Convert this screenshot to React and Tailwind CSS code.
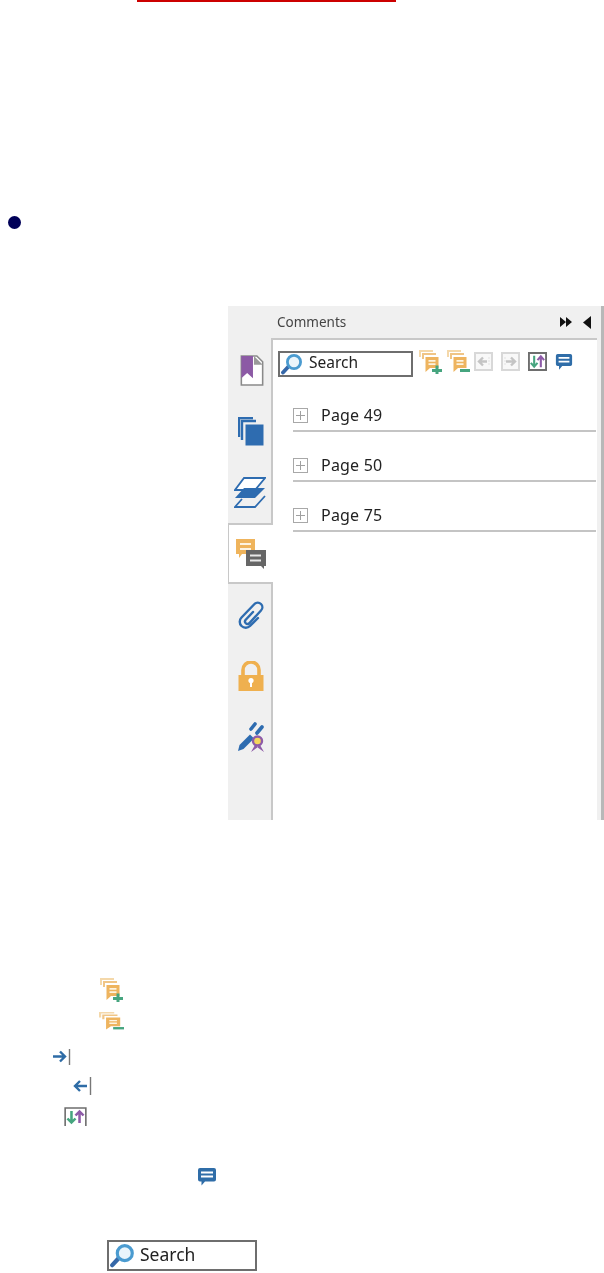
const Stack = ({ sign, className }) => (
  <svg viewBox="0 0 23 24" preserveAspectRatio="none" className={className}>
    <path d="M1 7V1h13" fill="none" stroke="#f4d8aa" strokeWidth="2" />
    <path d="M4 9V4h13" fill="none" stroke="#f0c586" strokeWidth="2" />
    <path d="M6.500 7h13v11H11l-4.500 4z" fill="#eeb45f" />
    <path d="M9.500 10.800h7M9.500 14.200h7" stroke="#fdf3e0" strokeWidth="1.700" />
    <path d="M13 20.500h10" stroke="#46a57f" strokeWidth="3" />
    {sign === "plus" && <path d="M18 15.500v8.500" stroke="#46a57f" strokeWidth="3" />}
  </svg>
);
const BoxArrow = ({ dir }) => (
  <svg viewBox="0 0 19 19" className="w-[19px] h-[19px]">
    <rect x="1" y="1" width="17" height="17" fill="#f8f8f8" stroke="#d8d8d8" strokeWidth="2" />
    {dir === "left" ? (
      <>
        <path d="M13 9.500H5M9 5.500l-4 4 4 4" fill="none" stroke="#c4c4c4" strokeWidth="2.400" />
        <path d="M15 5v9" stroke="#e2e2e2" strokeWidth="1" strokeDasharray="2 1" />
      </>
    ) : (
      <>
        <path d="M5 9.500h8M10 5.500l4 4-4 4" fill="none" stroke="#c4c4c4" strokeWidth="2.400" />
        <path d="M4 5v9" stroke="#e2e2e2" strokeWidth="1" strokeDasharray="2 1" />
      </>
    )}
  </svg>
);
const SortArrows = ({ className, boxed }) => (
  <svg viewBox="0 0 20 20" preserveAspectRatio="none" className={className}>
    <path d={boxed ? "M1 1h18v18H1z" : "M1 19V1h18v18"} fill="#fff" stroke="#6e6e6e" strokeWidth={boxed ? 2 : 1.400} />
    <path d="M6.500 4v11M3 11.500l3.500 4 3.500-4" fill="none" stroke="#46a57f" strokeWidth="2.200" />
    <path d="M13.500 16V5M10 8.500l3.500-4 3.500 4" fill="none" stroke="#8e5ba8" strokeWidth="2.200" />
  </svg>
);
const Chat = ({ className }) => (
  <svg viewBox="0 0 20 20" className={className}>
    <path d="M3 1h14a2 2 0 0 1 2 2v9.500a2 2 0 0 1-2 2H8l-3.500 4v-4H3a2 2 0 0 1-2-2V3a2 2 0 0 1 2-2z" fill="#2f6da8" />
    <path d="M4 5.500h12M4 9.500h12" stroke="#fff" strokeWidth="1.900" />
  </svg>
);
const Magnifier = ({ className }) => (
  <svg viewBox="0 0 22 21" className={className}>
    <path d="M8 12L2 18.500" stroke="#3567a8" strokeWidth="3.800" strokeLinecap="round" />
    <circle cx="13" cy="8" r="6.600" fill="#eaf5fb" stroke="#4a9bd0" strokeWidth="2.800" />
  </svg>
);
const SearchBox = ({ className, textClass, iconClass }) => (
  <div className={`flex items-center border-2 border-[#6e6e6e] bg-white ${className}`}>
    <Magnifier className={iconClass} />
    <span className={`font-['Noto_Sans',sans-serif] text-[#222] ${textClass}`}>Search</span>
  </div>
);
const Tab = ({ active, children }) => (
  <div
    className={
      active
        ? "h-[61px] w-[45px] relative z-10 flex items-center justify-center bg-white border-y-2 border-l border-[#c8c8c8]"
        : "h-[61px] flex items-center justify-center"
    }
  >
    {children}
  </div>
);
const PageRow = ({ n }) => (
  <div className="h-[50px] flex items-center border-b-2 border-[#c4c4c4] ml-[20px] mr-[1px] pt-[18px]">
    <svg viewBox="0 0 15 15" className="w-[15px] h-[15px]">
      <rect x="0.500" y="0.500" width="14" height="14" fill="#fff" stroke="#a8a8a8" />
      <path d="M3 7.500h9M7.500 3v9" stroke="#a0a0a0" />
    </svg>
    <span className="ml-[13px] font-['Noto_Sans',sans-serif] text-[16px] tracking-[0.2px] text-[#222]">Page {n}</span>
  </div>
);

export default function App() {
  return (
    <div className="w-[604px] h-[1273px] bg-white overflow-hidden">
      <div className="ml-[137px] w-[259px] h-[2px] bg-[#cc0000]" />
      <div className="ml-[8px] mt-[214px] w-[13px] h-[13px] rounded-full bg-[#000058]" />
      <div className="ml-[228px] mt-[77px] w-[376px] h-[514px] bg-[#f0f0f0] border-r-[3px] border-[#b8b8b8] flex blur-[0.3px]">
        <div className="w-[43px] pt-[34px] shrink-0 flex flex-col">
          <Tab>
            <svg viewBox="0 0 24 32" className="w-[24px] h-[31px] ml-[5px]">
              <path d="M1 1h16l6 6v24H1z" fill="#fff" stroke="#8a8a8a" strokeWidth="1.600" />
              <path d="M14 1l9 9h-9z" fill="#9a9a9a" />
              <path d="M1 1h12v23l-6-5.500L1 24z" fill="#8c5aa5" />
            </svg>
          </Tab>
          <Tab>
            <svg viewBox="0 0 26 29" className="w-[26px] h-[29px] ml-[3px]">
              <path d="M1 20V1h14M4 23V4h14" fill="none" stroke="#2e6cb0" strokeWidth="2.400" />
              <rect x="7.500" y="7.500" width="18" height="21" fill="#2e6cb0" />
            </svg>
          </Tab>
          <Tab>
            <svg viewBox="0 0 32 31" className="w-[32px] h-[31px] ml-[1px]">
              <path d="M10 1h21L21 13H1z" fill="#fff" stroke="#2e6cb0" strokeWidth="1.800" />
              <path d="M10 11h21L21 21H1z" fill="#2e6cb0" />
              <path d="M8 22l-7 8h20l10-11" fill="none" stroke="#2e6cb0" strokeWidth="1.800" />
            </svg>
          </Tab>
          <Tab active>
            <svg viewBox="0 0 30 30" className="w-[30px] h-[30px]">
              <path d="M0 0h19v15H6l-3 4v-4H0z" fill="#efb45c" />
              <path d="M4 5h11M4 10h11" stroke="#fdf3e0" strokeWidth="1.800" />
              <path d="M10 11h20v16h-2v3l-3-3H10z" fill="#666" />
              <path d="M14 16.500h11M14 21.500h11" stroke="#e8e8e8" strokeWidth="1.800" />
            </svg>
          </Tab>
          <Tab>
            <svg viewBox="0 0 27 30" className="w-[27px] h-[30px] ml-[3px]">
              <path d="M15 12L7.500 20a2.500 2.500 0 0 0 3.500 3.500L23 10.500a4.500 4.500 0 0 0-6.500-6.500L3.500 17.500a6 6 0 0 0 8.500 8.500L20 18" fill="none" stroke="#2e6cb0" strokeWidth="2.400" strokeLinecap="round" />
            </svg>
          </Tab>
          <Tab>
            <svg viewBox="0 0 26 30" className="w-[26px] h-[30px] ml-[3px]">
              <path d="M5 16V9a8 8 0 0 1 16 0v7" fill="none" stroke="#efb04f" strokeWidth="3.600" />
              <path d="M0.500 14h25v16H0.500z" fill="#efb04f" />
              <circle cx="13" cy="19.500" r="2.600" fill="#fff" />
              <path d="M12 20h2v6h-2z" fill="#fff" />
            </svg>
          </Tab>
          <Tab>
            <svg viewBox="0 0 28 32" className="w-[28px] h-[32px] ml-[3px]">
              <path d="M1 30l1.500-6L13 13.500l4 4L6.500 28z" fill="#2e6cb0" />
              <path d="M14 8l4-5M20 12l5-6" stroke="#2e6cb0" strokeWidth="3.600" strokeLinecap="round" />
              <path d="M14 31l4-7 3 2zM27 31l-4-7-3 2z" fill="#8e5ba8" />
              <circle cx="20.500" cy="20" r="4.500" fill="#f4d65c" stroke="#8e5ba8" strokeWidth="2.400" />
            </svg>
          </Tab>
        </div>
        <div className="flex-1 flex flex-col min-w-0">
          <div className="h-[32px] shrink-0 flex items-center pl-[6px] pr-[10px]">
            <span className="font-['Noto_Sans',sans-serif] text-[13.500px] text-[#444] flex-1">Comments</span>
            <svg viewBox="0 0 12 10" className="w-[12px] h-[10px]">
              <path d="M0 0l6 5L0 10zM6 0l6 5L6 10z" fill="#111" />
            </svg>
            <svg viewBox="0 0 8 13" className="w-[8px] h-[13px] ml-[11px]">
              <path d="M8 0v13L0 6.500z" fill="#111" />
            </svg>
          </div>
          <div className="flex-1 bg-white border-t-2 border-l-2 border-[#c8c8c8] mr-[4px] flex flex-col">
            <div className="flex items-start pl-[5px] pt-[11px] h-[42px] shrink-0">
              <SearchBox className="w-[135px] h-[26px] pl-[1px]" iconClass="w-[22px] h-[21px]" textClass="ml-[6px] text-[15.500px] pb-[2px]" />
              <div className="flex items-start ml-[6px] -mt-[1px]">
                <Stack sign="plus" className="w-[23px] h-[24px]" />
                <Stack sign="minus" className="w-[23px] h-[24px] ml-[5px]" />
                <div className="ml-[4px] mt-[2px]"><BoxArrow dir="left" /></div>
                <div className="ml-[8px] mt-[2px]"><BoxArrow dir="right" /></div>
                <SortArrows boxed className="w-[19px] h-[19px] ml-[8px] mt-[2px]" />
                <Chat className="w-[18px] h-[18px] ml-[8px] mt-[3px]" />
              </div>
            </div>
            <PageRow n={49} />
            <PageRow n={50} />
            <PageRow n={75} />
          </div>
        </div>
      </div>
      <div className="blur-[0.3px]">
        <Stack sign="plus" className="ml-[100px] mt-[158px] w-[23px] h-[24px]" />
        <Stack sign="minus" className="ml-[99px] mt-[10px] w-[25px] h-[19px]" />
        <svg viewBox="0 0 19 17" className="ml-[52px] mt-[17px] w-[19px] h-[17px]">
          <path d="M1 8.500h11M8 3.500l5 5-5 5" fill="none" stroke="#2e6ca6" strokeWidth="2.400" />
          <path d="M17.500 1v16" stroke="#777" strokeWidth="1.400" />
        </svg>
        <svg viewBox="0 0 19 18" className="ml-[73px] mt-[12px] w-[19px] h-[18px]">
          <path d="M14 9H3M7 4L2 9l5 5" fill="none" stroke="#2e6ca6" strokeWidth="2.400" />
          <path d="M17.500 0v18" stroke="#777" strokeWidth="1.400" />
        </svg>
        <SortArrows className="ml-[64px] mt-[12px] w-[23px] h-[20px]" />
        <Chat className="ml-[197px] mt-[40px] w-[20px] h-[20px]" />
        <SearchBox className="ml-[107px] mt-[53px] w-[150px] h-[31px] pl-[1px]" iconClass="w-[25px] h-[24px]" textClass="ml-[5px] text-[17.500px] pb-[3px]" />
      </div>
    </div>
  );
}
